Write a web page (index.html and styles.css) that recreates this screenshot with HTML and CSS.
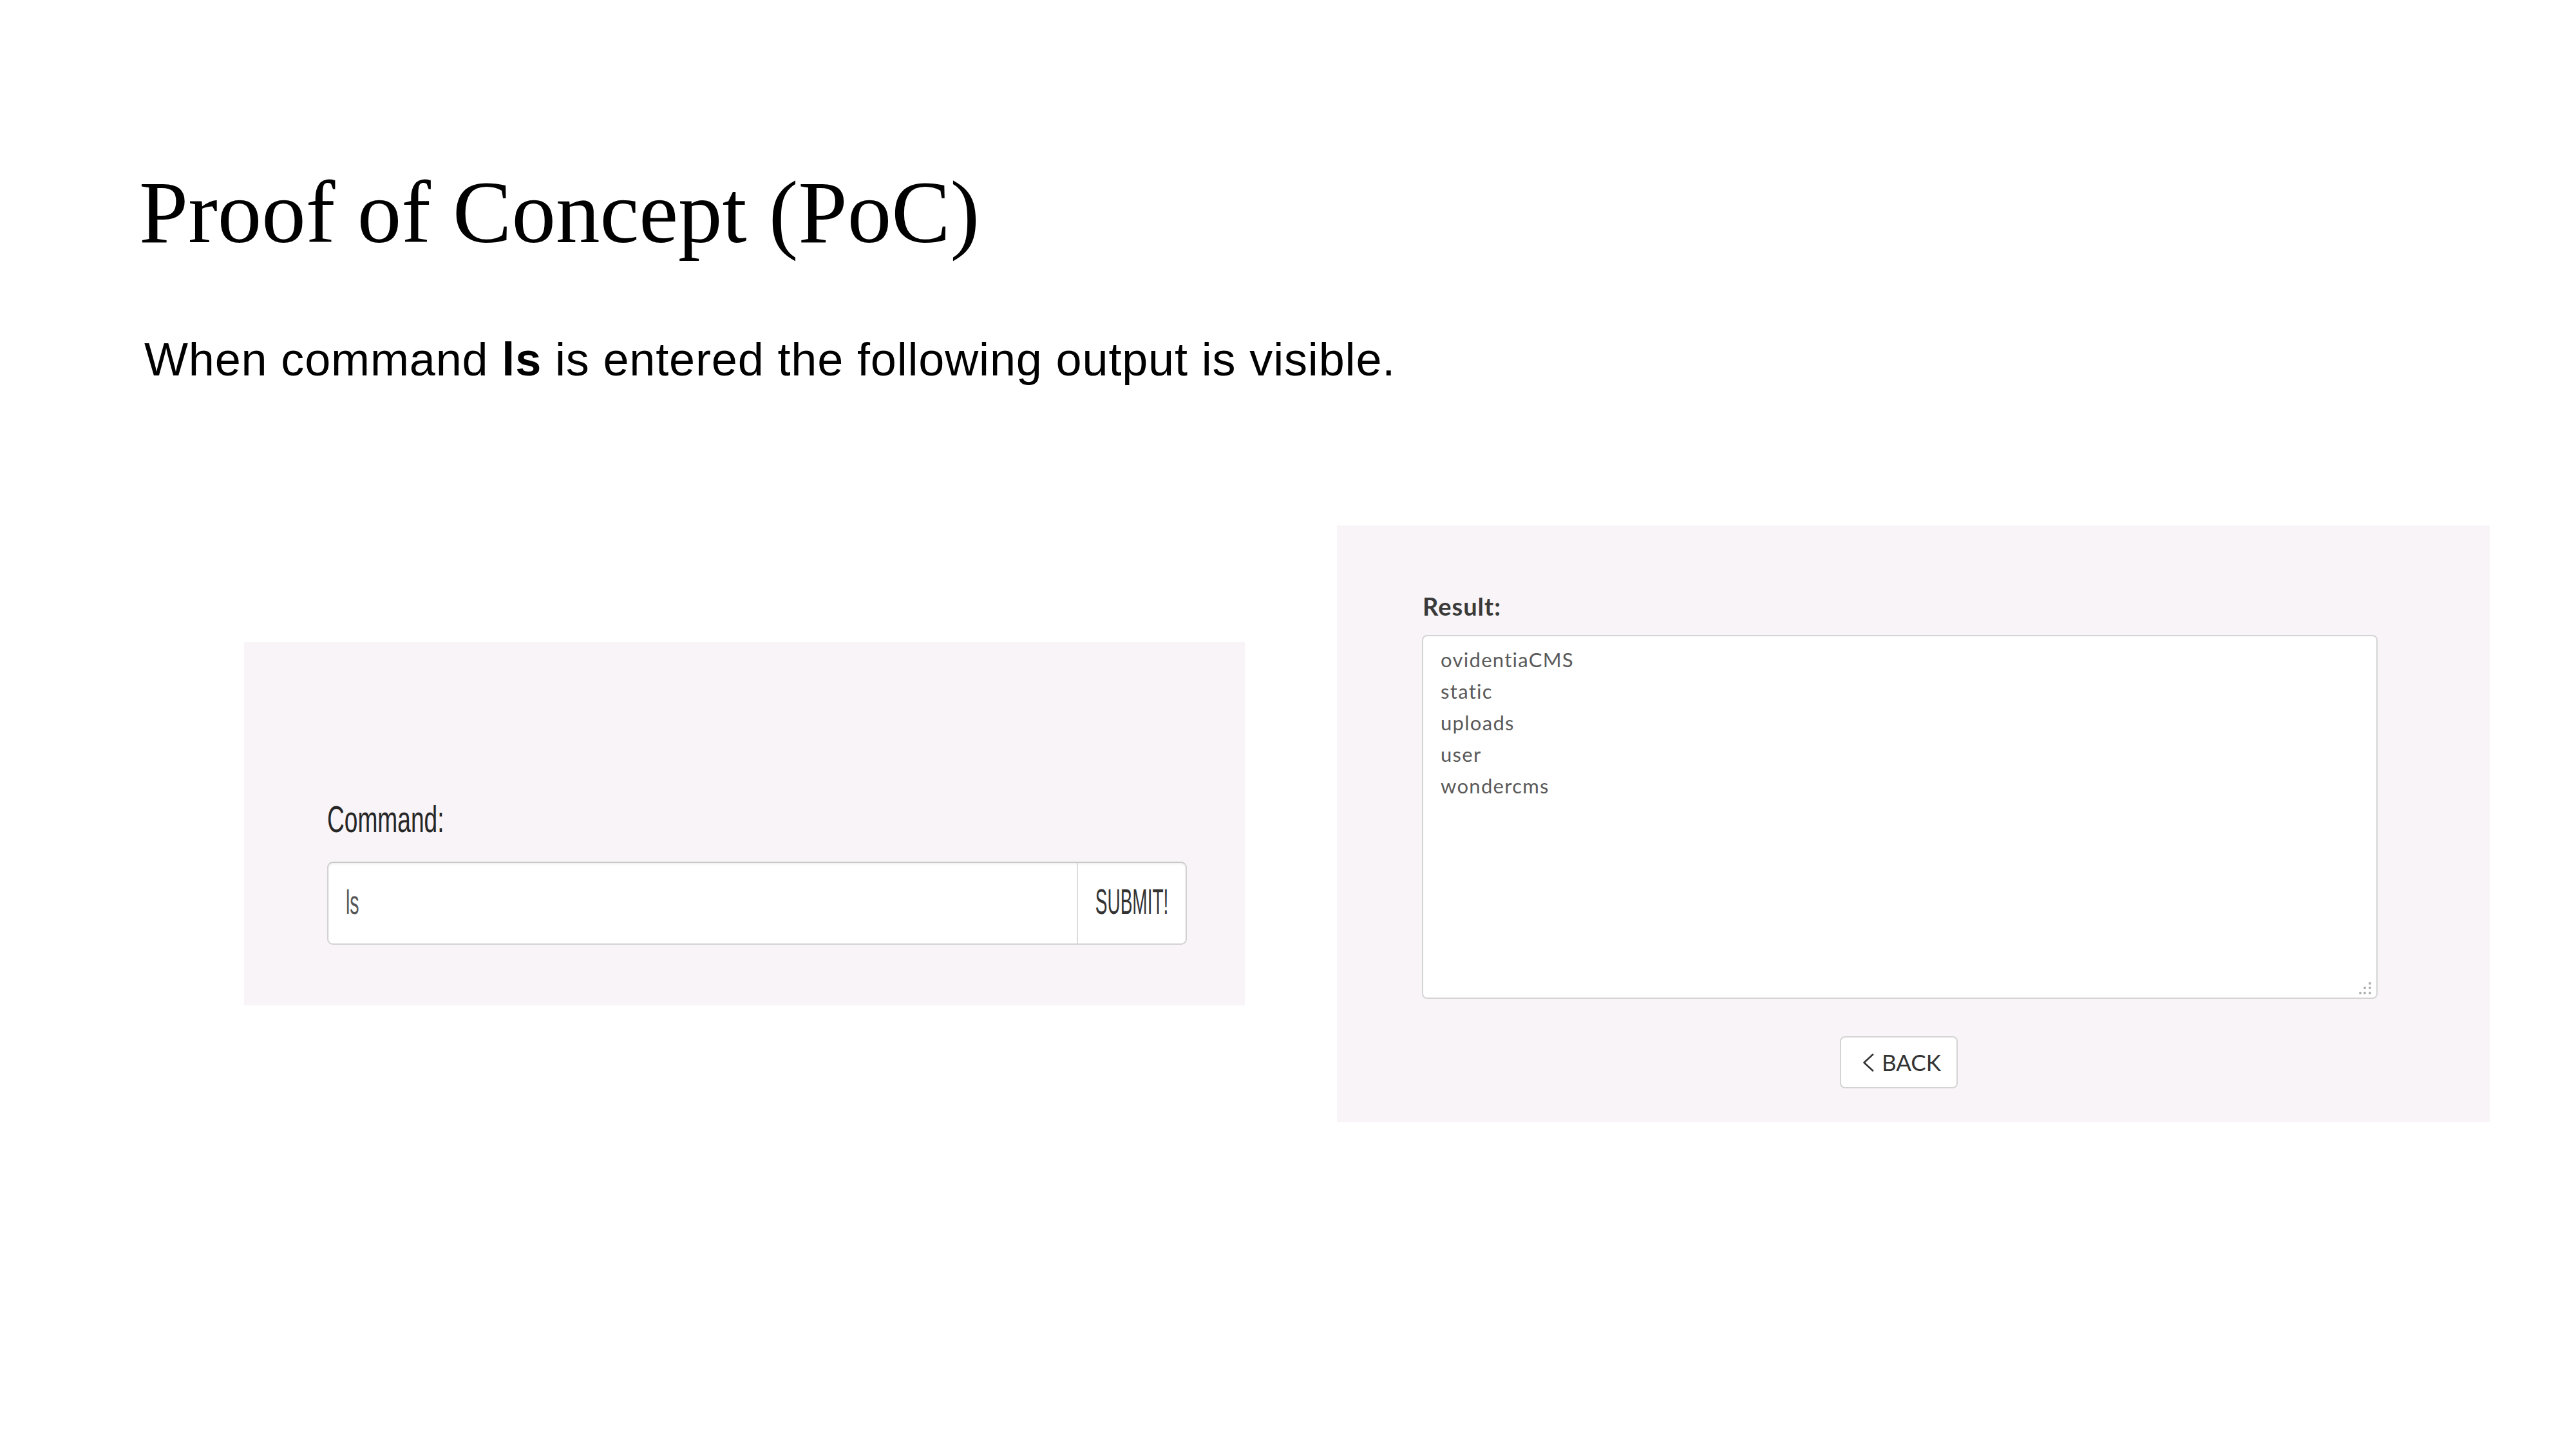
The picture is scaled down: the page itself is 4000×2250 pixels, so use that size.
FILE: index.html
```html
<!DOCTYPE html>
<html lang="en">
<head>
<meta charset="utf-8">
<title>Proof of Concept (PoC)</title>
<link rel="stylesheet" href="styles.css">
</head>
<body>
<div class="slide">
  <h1 class="title">Proof of Concept (PoC)</h1>
  <p class="lead">When command <b>ls</b> is entered the following output is visible.</p>
  <div class="shots">
    <section class="panel panel-cmd">
      <div class="cmd-label"><span class="squish sq-label">Command:</span></div>
      <div class="input-group">
        <div class="input-field"><span class="squish sq-ls">ls</span></div>
        <div class="input-btn"><span class="squish sq-submit">SUBMIT!</span></div>
      </div>
    </section>
    <section class="panel panel-result">
      <div class="result-label">Result:</div>
      <div class="result-box">
        <div class="line">ovidentiaCMS</div>
        <div class="line">static</div>
        <div class="line">uploads</div>
        <div class="line">user</div>
        <div class="line">wondercms</div>
        <svg class="grip" width="24" height="24" viewBox="0 0 24 24" aria-hidden="true">
          <rect x="3.3" y="18.3" width="3.4" height="3.4"/>
          <rect x="10.3" y="18.3" width="3.4" height="3.4"/>
          <rect x="18.3" y="18.3" width="3.4" height="3.4"/>
          <rect x="10.3" y="10.3" width="3.4" height="3.4"/>
          <rect x="18.3" y="10.3" width="3.4" height="3.4"/>
          <rect x="18.3" y="3.3" width="3.4" height="3.4"/>
        </svg>
      </div>
      <div class="back-row">
        <button class="back-btn" type="button">
          <svg class="chev" width="18" height="28" viewBox="0 0 18 28" aria-hidden="true"><polyline points="16,1.5 2.5,14 16,26.5"/></svg>
          <span>BACK</span>
        </button>
      </div>
    </section>
  </div>
</div>
</body>
</html>
```
FILE: styles.css
```css
html, body {
  margin: 0;
  padding: 0;
  background: #ffffff;
}

.slide {
  width: 4000px;
  height: 2250px;
  box-sizing: border-box;
  padding-top: 262px;
  overflow: hidden;
}

.title {
  margin: 0 0 0 216px;
  font-family: "Liberation Serif", "Times New Roman", serif;
  font-weight: 400;
  font-size: 137px;
  line-height: 1;
  color: #000;
}

.lead {
  margin: 123px 0 0 224px;
  font-family: "Liberation Sans", Arial, sans-serif;
  font-weight: 400;
  font-size: 72px;
  line-height: 1;
  letter-spacing: 0.85px;
  color: #000;
}

.lead b {
  font-weight: 700;
}

.shots {
  display: flex;
  align-items: flex-start;
  gap: 143px;
  margin-top: 222px;
  padding-left: 379px;
}

.panel {
  background: #f8f4f7;
  box-sizing: border-box;
}

/* ---------- left screenshot ---------- */
.panel-cmd {
  width: 1554px;
  height: 564px;
  margin-top: 181px;
  padding: 246px 90px 0 129px;
}

.squish {
  display: inline-block;
  transform-origin: left center;
  white-space: nowrap;
}

.cmd-label {
  height: 58px;
  font-family: "Liberation Sans", Arial, sans-serif;
  font-size: 58px;
  line-height: 1;
  color: #262626;
}

.sq-label {
  transform: scaleX(0.64);
}

.input-group {
  display: flex;
  height: 129px;
  margin-top: 37px;
  box-sizing: border-box;
  border: 2px solid #d2d2d2;
  border-top-color: #c8c8c8;
  border-radius: 9px;
  background: #ffffff;
  box-shadow: inset 0 2px 3px rgba(0, 0, 0, 0.06);
  overflow: hidden;
}

.input-field {
  flex: 1;
  display: flex;
  align-items: center;
  padding-left: 27px;
  font-family: "Liberation Sans", Arial, sans-serif;
  font-size: 52px;
  line-height: 1;
  color: #555;
}

.sq-ls {
  transform: scaleX(0.55);
  margin-top: -4px;
}

.input-btn {
  width: 169px;
  box-sizing: border-box;
  border-left: 2px solid #dcdcdc;
  display: flex;
  align-items: center;
  justify-content: center;
  font-family: "Liberation Sans", Arial, sans-serif;
  font-size: 56px;
  line-height: 1;
  color: #333;
}

.sq-submit {
  transform-origin: center center;
  transform: scaleX(0.5);
  margin-top: -6px;
}

/* ---------- right screenshot ---------- */
.panel-result {
  width: 1790px;
  height: 926px;
  padding: 106px 0 0 132px;
}

.result-label {
  height: 38px;
  padding-left: 1px;
  font-family: Lato, "Liberation Sans", sans-serif;
  font-weight: 700;
  font-size: 38px;
  line-height: 1;
  letter-spacing: 1px;
  color: #3a3a3a;
}

.result-box {
  position: relative;
  width: 1484px;
  height: 565px;
  margin-top: 26px;
  box-sizing: border-box;
  border: 2px solid #d4d4d4;
  border-radius: 8px;
  background: #ffffff;
  padding: 12px 22px 11px 27px;
  font-family: Lato, "Liberation Sans", sans-serif;
  font-size: 31px;
  line-height: 49px;
  letter-spacing: 1.3px;
  color: #5a5a5a;
}

.grip {
  position: absolute;
  right: 6px;
  bottom: 3px;
  fill: #a9a9a9;
}

.back-row {
  width: 1484px;
  display: flex;
  justify-content: center;
  margin-top: 58px;
}

.back-btn {
  width: 183px;
  height: 81px;
  box-sizing: border-box;
  border: 2px solid #d4d4d4;
  border-radius: 8px;
  background: #ffffff;
  display: flex;
  align-items: center;
  gap: 12px;
  padding: 0 0 0 33px;
  margin-left: -3px;
  font-family: Lato, "Liberation Sans", sans-serif;
  font-size: 35px;
  line-height: 1;
  color: #333;
}

.chev {
  flex: none;
  fill: none;
  stroke: #333;
  stroke-width: 2.6;
  stroke-linecap: round;
  stroke-linejoin: round;
}
```
